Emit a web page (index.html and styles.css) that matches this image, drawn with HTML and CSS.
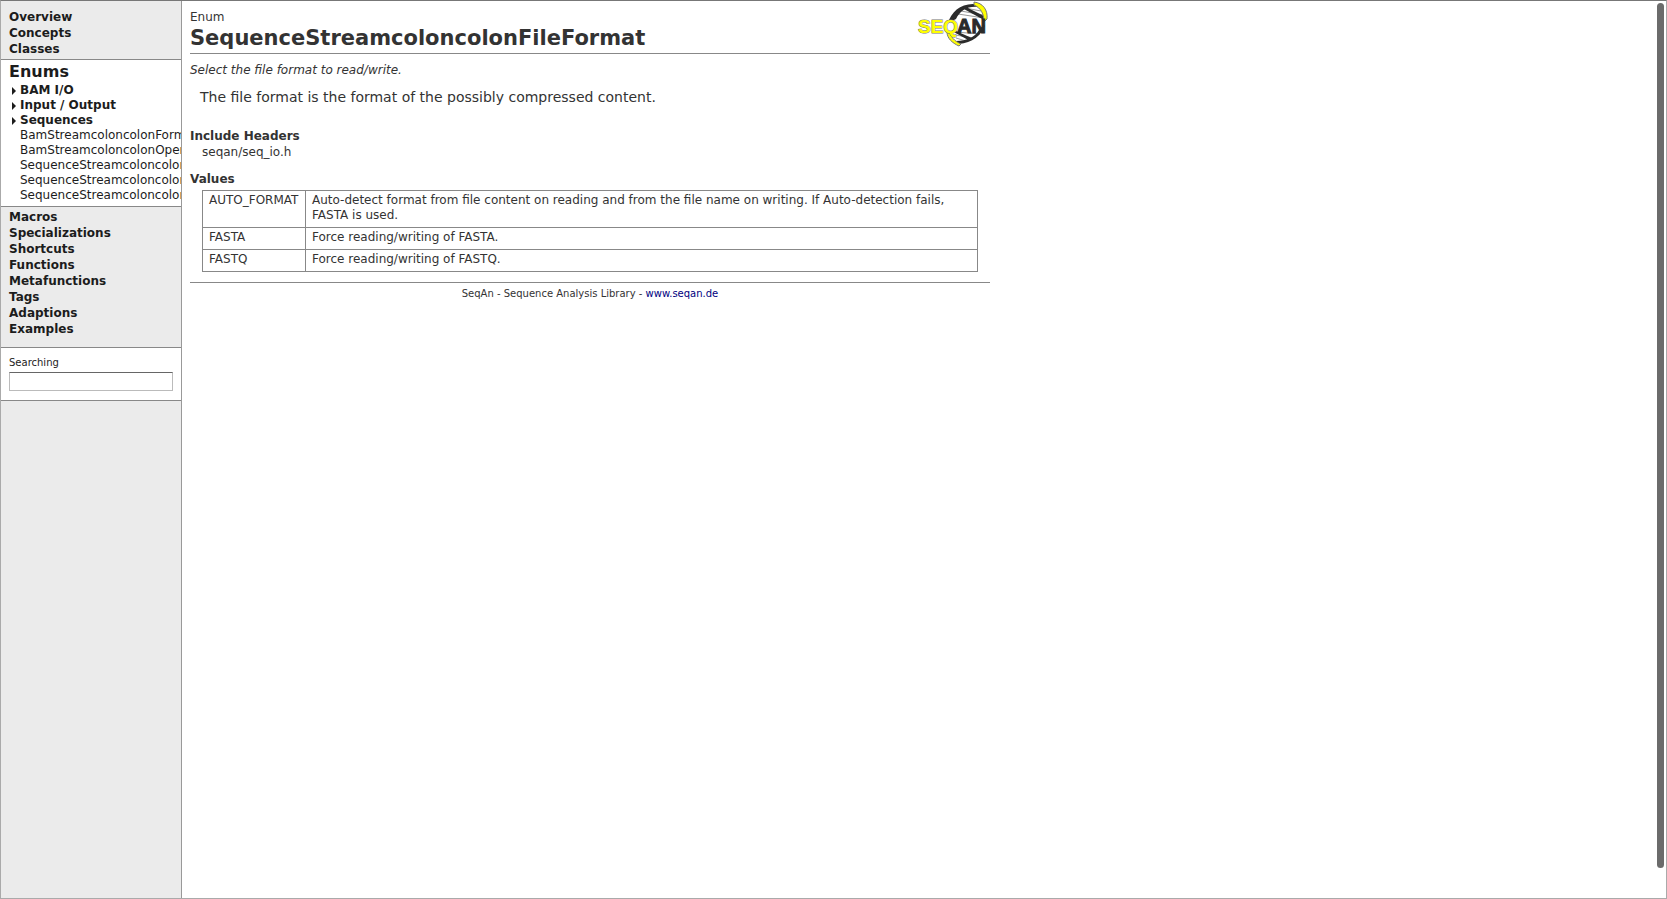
FILE: index.html
```html
<!DOCTYPE html>
<html lang="en">
<head>
<meta charset="utf-8">
<title>SequenceStreamcoloncolonFileFormat</title>
<link rel="stylesheet" href="styles.css">
</head>
<body>
<div class="window">
  <nav class="sidebar">
    <ul class="topics">
      <li><a href="#">Overview</a></li>
      <li><a href="#">Concepts</a></li>
      <li><a href="#">Classes</a></li>
    </ul>
    <section class="panel">
      <h2><a href="#">Enums</a></h2>
      <ul class="groups">
        <li><a href="#"><svg class="arrow" viewBox="0 0 4 8"><path d="M0 0L4 4L0 8Z"/></svg>BAM I/O</a></li>
        <li><a href="#"><svg class="arrow" viewBox="0 0 4 8"><path d="M0 0L4 4L0 8Z"/></svg>Input / Output</a></li>
        <li><a href="#"><svg class="arrow" viewBox="0 0 4 8"><path d="M0 0L4 4L0 8Z"/></svg>Sequences</a></li>
      </ul>
      <ul class="entries">
        <li><a href="#">BamStreamcoloncolonForm</a></li>
        <li><a href="#">BamStreamcoloncolonOper</a></li>
        <li><a href="#">SequenceStreamcoloncolon</a></li>
        <li><a href="#">SequenceStreamcoloncolon</a></li>
        <li><a href="#">SequenceStreamcoloncolon</a></li>
      </ul>
    </section>
    <ul class="topics topics-lower">
      <li><a href="#">Macros</a></li>
      <li><a href="#">Specializations</a></li>
      <li><a href="#">Shortcuts</a></li>
      <li><a href="#">Functions</a></li>
      <li><a href="#">Metafunctions</a></li>
      <li><a href="#">Tags</a></li>
      <li><a href="#">Adaptions</a></li>
      <li><a href="#">Examples</a></li>
    </ul>
    <form class="search">
      <label for="search">Searching</label>
      <input id="search" type="text">
    </form>
  </nav>
  <main class="page">
    <header class="head">
      <div>
        <p class="kind">Enum</p>
        <h1>SequenceStreamcoloncolonFileFormat</h1>
      </div>
      <svg class="logo" viewBox="0 0 72 46" role="img" aria-label="SeqAn">
        <path d="M58 4C48 4 37 11 33 20L37 41C49 42 60 37 66 28L66 15Z" fill="#fff"/>
        <path d="M47 7L63 10M43 10L65 14M40 13L66 17M37 31L62 33M37 34L56 37M38 37L48 40" stroke="#999" fill="none"/>
        <path d="M30 22C33 11 43 2 57 3L60 6C49 5 42 10 38 18ZM67 24C64 34 54 42 41 43L38 40C49 40 57 36 61 29ZM44 7L48 6L66 15L66 19ZM34 30L38 30L56 38L52 40Z" fill="#2b2b2b"/>
        <path d="M56 1C65 2 70 9 69 18L66 21C66 13 63 7 56 4ZM31 30C33 36 36 40 43 43L41 45C34 42 29 37 29 31Z" fill="#ff0" stroke="#777" stroke-width="1"/>
        <g class="logo-text"><text x="0" y="32" class="logo-seq">SEQ</text><text x="39" y="32" class="logo-an">AN</text></g>
      </svg>
    </header>
    <p class="summary">Select the file format to read/write.</p>
    <p class="description">The file format is the format of the possibly compressed content.</p>
    <h3>Include Headers</h3>
    <p class="include">seqan/seq_io.h</p>
    <h3>Values</h3>
    <div class="values">
      <table>
        <tbody>
          <tr><td>AUTO_FORMAT</td><td>Auto-detect format from file content on reading and from the file name on writing. If Auto-detection fails, FASTA is used.</td></tr>
          <tr><td>FASTA</td><td>Force reading/writing of FASTA.</td></tr>
          <tr><td>FASTQ</td><td>Force reading/writing of FASTQ.</td></tr>
        </tbody>
      </table>
    </div>
    <footer>SeqAn - Sequence Analysis Library - <a href="#">www.seqan.de</a></footer>
  </main>
  <div class="scroll-thumb"></div>
</div>
</body>
</html>
```
FILE: styles.css
```css
* { box-sizing: border-box; }
body {
  margin: 0;
  background: #fff;
  color: #333;
  font: 12px/15px Verdana, "DejaVu Sans", sans-serif;
}
h1, h2, h3, p, ul { margin: 0; padding: 0; }
ul { list-style: none; }
a { color: inherit; text-decoration: none; }

.window {
  position: relative;
  display: flex;
  min-height: 100vh;
  border: 1px solid #aaa;
  border-top-color: #777;
}
.sidebar {
  flex: none;
  width: 181px;
  background: #ebebeb;
  border-right: 1px solid #999;
  color: #1c1c1c;
  white-space: nowrap;
  overflow: hidden;
}
.topics {
  padding: 8px 8px 2px;
  font-weight: bold;
  line-height: 16px;
}
.topics-lower { padding: 2px 8px 10px; }
.panel {
  padding: 2px 0 3px 8px;
  background: #fff;
  border: solid #888;
  border-width: 1px 0;
  overflow: hidden;
}
.panel h2 { font-size: 16px; line-height: 19px; padding-bottom: 2px; }
.groups { font-weight: bold; }
.groups a { display: flex; align-items: center; }
.arrow { width: 4px; height: 8px; margin: 0 4px 0 3px; fill: #1c1c1c; }
.entries { padding-left: 11px; }
.entries li { overflow: hidden; }
.search {
  padding: 7px 8px 9px;
  background: #fff;
  border: solid #888;
  border-width: 1px 0;
}
.search label { display: block; font-size: 10px; }
.search input {
  display: block;
  width: 100%;
  height: 19px;
  margin-top: 2px;
  padding: 0 3px;
  border: 1px solid #bbb;
  border-top: 1px solid #666;
  background: #fff;
  font: inherit;
}

.page { flex: 0 1 800px; margin-left: 8px; }
.head {
  display: flex;
  justify-content: space-between;
  height: 53px;
  border-bottom: 1px solid #888;
}
.kind { padding-top: 8px; line-height: 16px; }
h1 { font-size: 21px; line-height: 26px; }
.logo { width: 72px; height: 46px; overflow: visible; }
.logo-text { font: bold 19px "Liberation Sans", sans-serif; }
.logo-seq { fill: #ff0; stroke: #777; stroke-width: 1px; paint-order: stroke; }
.logo-an { fill: #2b2b2b; stroke: #2b2b2b; stroke-width: 1px; font-size: 20px; }
.summary { padding-top: 9px; font-style: italic; }
.description { padding: 10px 10px 21px; font-size: 14px; line-height: 18px; }
h3 { font-size: 12px; line-height: 18px; }
.include { padding: 0 12px 10px; }
.values { padding: 2px 12px 10px; }
table { width: 100%; border-collapse: collapse; }
td {
  padding: 2px 6px 4px;
  border: 1px solid #888;
  vertical-align: top;
}
td:first-child { width: 103px; }
footer {
  padding-top: 3px;
  border-top: 1px solid #888;
  font-size: 10px;
  text-align: center;
}
footer a { color: #000080; }
.scroll-thumb {
  position: absolute;
  top: 2px;
  bottom: 30px;
  right: 2px;
  width: 7px;
  border-radius: 4px;
  background: #6b6b6b;
}
```
